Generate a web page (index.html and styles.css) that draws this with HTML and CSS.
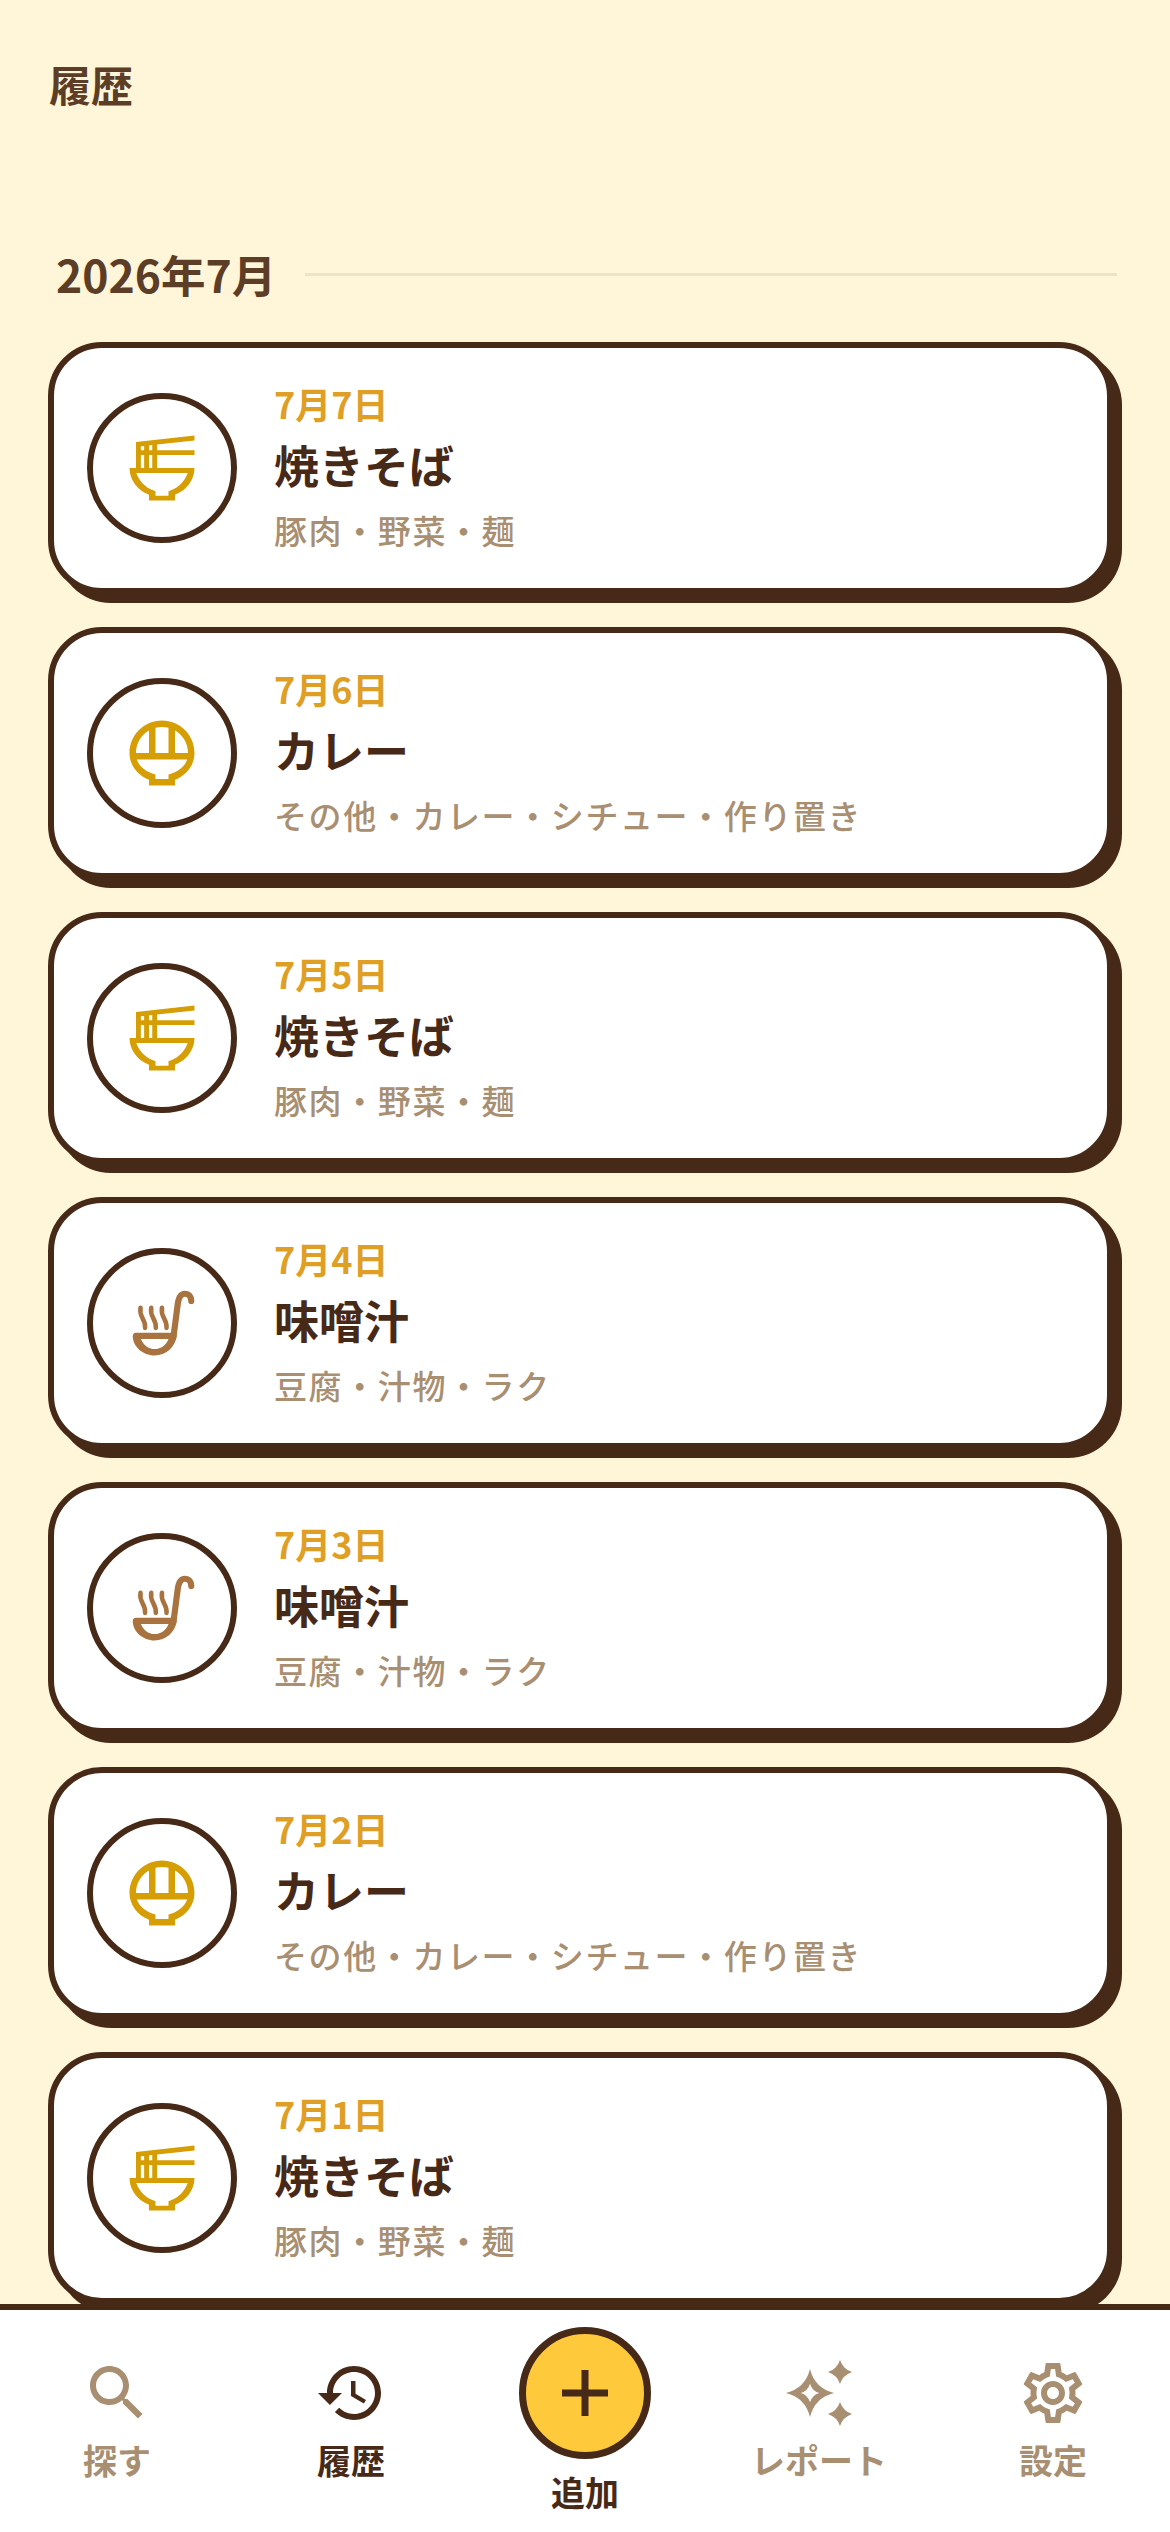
FILE: index.html
```html
<!DOCTYPE html>
<html lang="ja">
<head>
    <meta charset="UTF-8">
    <meta name="viewport" content="width=device-width, initial-scale=1.0">
    <title>履歴</title>
    <link rel="stylesheet" href="styles.css">
</head>
<body>
    <svg class="defs" aria-hidden="true">
        <symbol id="ramen" viewBox="0 0 24 24">
            <path fill-rule="evenodd" d="M22 3.51V2L4 3.99V12H2c0 3.69 2.47 6.86 6 8.25V22h8v-1.75c3.53-1.39 6-4.56 6-8.25H10.5V8H22V6.5H10.5V4.78L22 3.51zM5.5 5.34l1-.11V6.5h-1zM8 5.06l1-.11V6.5H8zM5.5 8h1v4h-1zM8 8h1v4H8zM14.75 18.86l-.75.28v1.36h-4v-1.36l-.75-.29C6.81 17.89 4.9 15.9 4.1 13.5h15.8c-.8 2.4-2.71 4.39-5.15 5.36z"/>
        </symbol>
        <symbol id="rice" viewBox="0 0 24 24">
            <path fill-rule="evenodd" d="M22 12c0-5.52-4.48-10-10-10S2 6.48 2 12c0 3.69 2.47 6.86 6 8.25V22h8v-1.75c3.53-1.39 6-4.56 6-8.25zM20 12h-4V5.08C18.39 6.47 20 9.05 20 12zM14 4.26V12h-4V4.26C10.64 4.1 11.31 4 12 4s1.36.1 2 .26zM4 12c0-2.95 1.61-5.53 4-6.92V12H4zM14.75 18.39l-.75.24V20h-4v-1.37l-.75-.24C6.81 17.55 4.9 15.96 4.25 14h15.5c-.65 1.96-2.56 3.55-5 4.39z"/>
        </symbol>
        <symbol id="soup" viewBox="0 0 24 24">
            <path fill-rule="evenodd" d="M3.9 15h11.7c.6 0 .95.45.9 1-.4 3.4-3.3 6-6.8 6-3.600 0-6.700-2.800-6.700-6 0-.55.35-1 .9-1zM5.500 16.900c.7 1.800 2.300 3.100 4.200 3.100 2 0 3.700-1.300 4.300-3.100z"/>
            <path class="ladle" d="M15.500 16.500 16.800 6.500C17.100 3.900 18 3 19 3c1.300 0 2 1 2 2.200"/>
            <path class="steam" d="M5.400 7.300c-.3 1.500.1 2.300.6 3.200.5.900.9 1.700.8 3"/>
            <path class="steam" d="M8.700 7.300c-.3 1.500.1 2.300.6 3.200.5.900.9 1.700.8 3"/>
            <path class="steam" d="M12 7.300c-.3 1.500.1 2.300.6 3.200.5.900.9 1.700.8 3"/>
        </symbol>
    </svg>

    <div class="app">
        <main class="content">
            <h1 class="page-title">履歴</h1>

            <div class="month-row">
                <h2 class="month">2026年7月</h2>
                <div class="month-line"></div>
            </div>

            <ul class="list">
                <li class="card">
                    <div class="badge ramen"><svg><use href="#ramen"/></svg></div>
                    <div class="info">
                        <p class="date">7月7日</p>
                        <p class="name">焼きそば</p>
                        <p class="tags">豚肉・野菜・麺</p>
                    </div>
                </li>
                <li class="card">
                    <div class="badge rice"><svg><use href="#rice"/></svg></div>
                    <div class="info">
                        <p class="date">7月6日</p>
                        <p class="name">カレー</p>
                        <p class="tags">その他・カレー・シチュー・作り置き</p>
                    </div>
                </li>
                <li class="card">
                    <div class="badge ramen"><svg><use href="#ramen"/></svg></div>
                    <div class="info">
                        <p class="date">7月5日</p>
                        <p class="name">焼きそば</p>
                        <p class="tags">豚肉・野菜・麺</p>
                    </div>
                </li>
                <li class="card">
                    <div class="badge soup"><svg><use href="#soup"/></svg></div>
                    <div class="info">
                        <p class="date">7月4日</p>
                        <p class="name">味噌汁</p>
                        <p class="tags">豆腐・汁物・ラク</p>
                    </div>
                </li>
                <li class="card">
                    <div class="badge soup"><svg><use href="#soup"/></svg></div>
                    <div class="info">
                        <p class="date">7月3日</p>
                        <p class="name">味噌汁</p>
                        <p class="tags">豆腐・汁物・ラク</p>
                    </div>
                </li>
                <li class="card">
                    <div class="badge rice"><svg><use href="#rice"/></svg></div>
                    <div class="info">
                        <p class="date">7月2日</p>
                        <p class="name">カレー</p>
                        <p class="tags">その他・カレー・シチュー・作り置き</p>
                    </div>
                </li>
                <li class="card">
                    <div class="badge ramen"><svg><use href="#ramen"/></svg></div>
                    <div class="info">
                        <p class="date">7月1日</p>
                        <p class="name">焼きそば</p>
                        <p class="tags">豚肉・野菜・麺</p>
                    </div>
                </li>
            </ul>
        </main>

        <nav class="tabbar">
            <div class="tab">
                <svg class="tab-icon" viewBox="0 0 24 24"><path d="M15.500 14h-.79l-.28-.27C15.410 12.590 16 11.110 16 9.500 16 5.910 13.090 3 9.500 3S3 5.910 3 9.500 5.910 16 9.500 16c1.610 0 3.090-.59 4.230-1.570l.27.28v.79l5 4.990L20.490 19l-4.990-5zm-6 0C7.010 14 5 11.990 5 9.500S7.010 5 9.500 5 14 7.010 14 9.500 11.990 14 9.500 14z"/></svg>
                <span class="tab-label">探す</span>
            </div>
            <div class="tab active">
                <svg class="tab-icon" viewBox="0 0 24 24"><path d="M13 3c-4.970 0-9 4.030-9 9H1l3.890 3.890.07.14L9 12H6c0-3.870 3.130-7 7-7s7 3.130 7 7-3.130 7-7 7c-1.930 0-3.680-.79-4.940-2.060l-1.420 1.420C8.270 19.990 10.510 21 13 21c4.970 0 9-4.030 9-9s-4.030-9-9-9zm-1 5v5l4.280 2.540.72-1.210-3.500-2.080V8H12z"/></svg>
                <span class="tab-label">履歴</span>
            </div>
            <div class="tab add">
                <div class="add-button">
                    <svg class="plus" viewBox="0 0 46 46"><path d="M19.500 0h7v19.500H46v7H26.500V46h-7V26.500H0v-7h19.500z"/></svg>
                </div>
                <span class="tab-label">追加</span>
            </div>
            <div class="tab">
                <svg class="tab-icon" viewBox="0 0 24 24"><path fill-rule="evenodd" d="M9 4Q10.600 10.400 17 12 10.600 13.600 9 20 7.400 13.600 1 12 7.400 10.400 9 4zM9 8.900Q8.300 11.300 5.900 12 8.300 12.700 9 15.100 9.700 12.700 12.100 12 9.700 11.300 9 8.900z"/><path d="M19 1Q20 4 23 5 20 6 19 9 18 6 15 5 18 4 19 1zM19 15Q20 18 23 19 20 20 19 23 18 20 15 19 18 18 19 15z"/></svg>
                <span class="tab-label">レポート</span>
            </div>
            <div class="tab">
                <svg class="tab-icon" viewBox="0 0 24 24"><path d="M19.430 12.980c.04-.32.07-.64.07-.98 0-.34-.03-.66-.07-.98l2.110-1.650c.19-.15.24-.42.12-.64l-2-3.460c-.09-.16-.26-.25-.44-.25-.06 0-.12.01-.17.03l-2.490 1c-.52-.4-1.080-.73-1.690-.98l-.38-2.650C14.460 2.180 14.250 2 14 2h-4c-.25 0-.46.18-.49.42l-.38 2.650c-.61.25-1.170.59-1.690.98l-2.490-1c-.06-.02-.12-.03-.18-.03-.17 0-.34.09-.43.25l-2 3.460c-.13.22-.07.49.12.64l2.110 1.650c-.04.32-.07.65-.07.98 0 .33.03.66.07.98l-2.110 1.650c-.19.15-.24.42-.12.64l2 3.460c.09.16.26.25.44.25.06 0 .12-.01.17-.03l2.490-1c.52.4 1.080.73 1.690.98l.38 2.650c.03.24.24.42.49.42h4c.25 0 .46-.18.49-.42l.38-2.650c.61-.25 1.170-.59 1.690-.98l2.490 1c.06.02.12.03.18.03.17 0 .34-.09.43-.25l2-3.460c.12-.22.07-.49-.12-.64l-2.110-1.650zm-1.980-1.710c.04.31.05.52.05.73 0 .21-.02.43-.05.73l-.14 1.130.89.7 1.080.84-.7 1.210-1.270-.51-1.040-.42-.9.68c-.43.32-.84.56-1.250.73l-1.060.43-.16 1.130-.2 1.350h-1.400l-.19-1.350-.16-1.130-1.060-.43c-.43-.18-.83-.41-1.230-.71l-.91-.7-1.060.43-1.270.51-.7-1.210 1.080-.84.89-.7-.14-1.130c-.03-.31-.05-.54-.05-.74s.02-.43.05-.73l.14-1.130-.89-.7-1.080-.84.7-1.210 1.270.51 1.040.42.9-.68c.43-.32.84-.56 1.250-.73l1.060-.43.16-1.130.2-1.350h1.390l.19 1.350.16 1.130 1.060.43c.43.18.83.41 1.230.71l.91.7 1.060-.43 1.270-.51.7 1.210-1.070.85-.89.7.14 1.130zM12 8c-2.210 0-4 1.790-4 4s1.790 4 4 4 4-1.790 4-4-1.790-4-4-4zm0 6c-1.100 0-2-.9-2-2s.9-2 2-2 2 .9 2 2-.9 2-2 2z"/></svg>
                <span class="tab-label">設定</span>
            </div>
        </nav>
    </div>
</body>
</html>
```

FILE: styles.css
```css
* {
    box-sizing: border-box;
}
body {
    margin: 0;
    background-color: #fff5d9;
    font-family: "Noto Sans CJK JP", "Noto Sans", sans-serif;
    color: #472918;
}
p, h1, h2, ul {
    margin: 0;
    padding: 0;
}
.defs {
    display: none;
}
.app {
    height: 2532px;
    display: flex;
    flex-direction: column;
    overflow: hidden;
}
.content {
    flex: 1;
    min-height: 0;
    overflow: hidden;
    padding: 57px 48px 0;
}
.page-title {
    font-size: 42px;
    line-height: 54px;
    font-weight: 700;
    color: #5c3d26;
    padding-left: 1px;
}
.month-row {
    display: flex;
    align-items: center;
    gap: 29px;
    margin-top: 133px;
    padding-left: 8px;
    padding-right: 5px;
    height: 60px;
}
.month {
    font-size: 44.5px;
    line-height: 60px;
    font-weight: 700;
    color: #5c3d26;
}
.month-line {
    flex: 1;
    height: 3px;
    background-color: #eee2c7;
}
.list {
    list-style: none;
    margin-top: 38px;
    display: flex;
    flex-direction: column;
    gap: 33px;
}
.card {
    height: 252px;
    width: 1065px;
    display: flex;
    align-items: center;
    gap: 37px;
    padding: 0 33px;
    background-color: #fff;
    border: 6px solid #472918;
    border-radius: 54px;
    box-shadow: 9px 9px 0 #472918;
    flex-shrink: 0;
}
.badge {
    width: 150px;
    height: 150px;
    flex-shrink: 0;
    display: flex;
    align-items: center;
    justify-content: center;
    border: 6px solid #472918;
    border-radius: 50%;
}
.badge svg {
    width: 78px;
    height: 78px;
}
.ramen, .rice {
    fill: #d69e05;
}
.soup {
    fill: #a8733f;
}
.ladle {
    fill: none;
    stroke: #a8733f;
    stroke-width: 1.9;
    stroke-linecap: round;
}
.steam {
    fill: none;
    stroke: #a8733f;
    stroke-width: 1.4;
    stroke-linecap: round;
}
.info {
    padding-bottom: 3px;
}
.date {
    font-size: 36px;
    line-height: 44px;
    font-weight: 700;
    color: #df9f25;
    margin-bottom: 9px;
}
.name {
    font-size: 45px;
    line-height: 62px;
    font-weight: 700;
    color: #472918;
}
.tags {
    font-size: 33px;
    line-height: 44px;
    font-weight: 500;
    color: #a98f72;
    letter-spacing: 1.6px;
    margin-top: 12px;
}
.tabbar {
    height: 228px;
    flex-shrink: 0;
    display: grid;
    grid-template-columns: repeat(5, 1fr);
    background-color: #fff;
    border-top: 6px solid #472918;
}
.tab {
    display: flex;
    flex-direction: column;
    align-items: center;
    padding-top: 47px;
    color: #a98f72;
    fill: #a98f72;
}
.tab.active {
    color: #472918;
    fill: #472918;
}
.tab-icon {
    width: 72px;
    height: 72px;
}
.tab-label {
    font-size: 34px;
    line-height: 44px;
    font-weight: 700;
    margin-top: 9px;
}
.tab.add {
    padding-top: 17px;
    color: #472918;
}
.add .tab-label {
    margin-top: 11px;
}
.add-button {
    width: 132px;
    height: 132px;
    display: flex;
    align-items: center;
    justify-content: center;
    background-color: #ffc93c;
    border: 7px solid #472918;
    border-radius: 50%;
}
.plus {
    width: 46px;
    height: 46px;
    fill: #472918;
}
```
